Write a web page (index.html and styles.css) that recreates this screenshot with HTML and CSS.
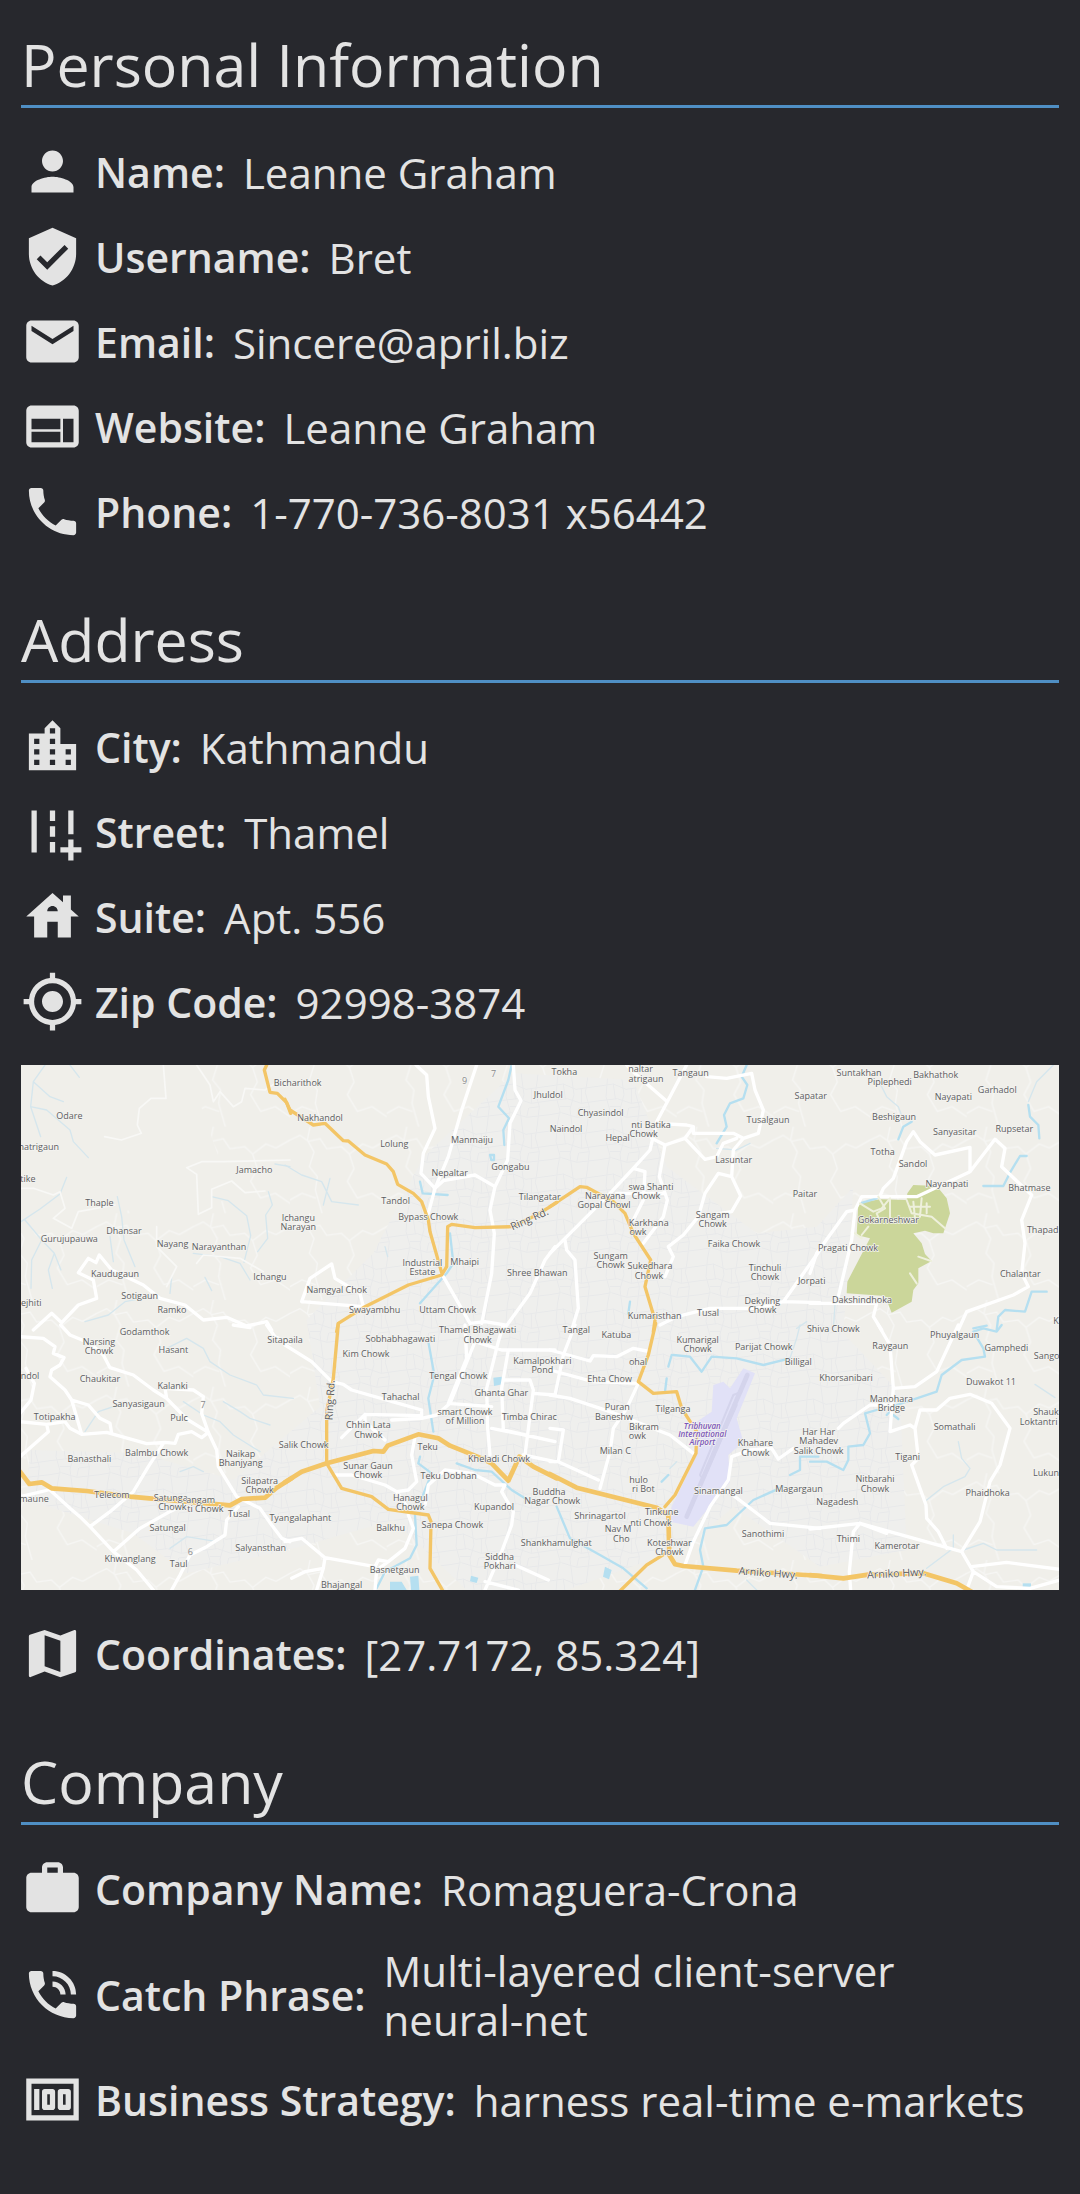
FILE: index.html
```html
<!DOCTYPE html>
<html lang="en">
<head>
<meta charset="utf-8">
<meta name="viewport" content="width=device-width, initial-scale=1">
<title>Leanne Graham</title>
<link rel="stylesheet" href="styles.css">
</head>
<body>
<main class="profile">
  <section class="section">
    <h2 class="section-title">Personal Information</h2>
    <dl class="rows">
      <div class="row">
        <svg class="icon" viewBox="0 0 24 24" aria-hidden="true"><path d="M12 12c2.21 0 4-1.79 4-4s-1.79-4-4-4-4 1.79-4 4 1.79 4 4 4zm0 2c-2.67 0-8 1.34-8 4v2h16v-2c0-2.66-5.33-4-8-4z"/></svg>
        <dt>Name:</dt><dd>Leanne Graham</dd>
      </div>
      <div class="row">
        <svg class="icon" viewBox="0 0 24 24" aria-hidden="true"><path d="M12 1L3 5v6c0 5.55 3.84 10.74 9 12 5.16-1.26 9-6.45 9-12V5l-9-4zm-2 16l-4-4 1.41-1.41L10 14.17l6.59-6.59L18 9l-8 8z"/></svg>
        <dt>Username:</dt><dd>Bret</dd>
      </div>
      <div class="row">
        <svg class="icon" viewBox="0 0 24 24" aria-hidden="true"><path d="M20 4H4c-1.1 0-1.99.9-1.99 2L2 18c0 1.1.9 2 2 2h16c1.1 0 2-.9 2-2V6c0-1.1-.9-2-2-2zm0 4l-8 5-8-5V6l8 5 8-5v2z"/></svg>
        <dt>Email:</dt><dd>Sincere@april.biz</dd>
      </div>
      <div class="row">
        <svg class="icon" viewBox="0 0 24 24" aria-hidden="true"><path d="M20 4H4c-1.1 0-1.99.9-1.99 2L2 18c0 1.1.9 2 2 2h16c1.1 0 2-.9 2-2V6c0-1.1-.9-2-2-2zm-5 14H4v-4h11v4zm0-5H4V9h11v4zm5 5h-4V9h4v9z"/></svg>
        <dt>Website:</dt><dd>Leanne Graham</dd>
      </div>
      <div class="row">
        <svg class="icon" viewBox="0 0 24 24" aria-hidden="true"><path d="M6.62 10.79c1.44 2.83 3.76 5.14 6.59 6.59l2.2-2.2c.27-.27.67-.36 1.02-.24 1.12.37 2.33.57 3.57.57.55 0 1 .45 1 1V20c0 .55-.45 1-1 1-9.39 0-17-7.61-17-17 0-.55.45-1 1-1h3.5c.55 0 1 .45 1 1 0 1.25.2 2.45.57 3.57.11.35.03.74-.25 1.02l-2.2 2.2z"/></svg>
        <dt>Phone:</dt><dd>1-770-736-8031 x56442</dd>
      </div>
    </dl>
  </section>

  <section class="section">
    <h2 class="section-title">Address</h2>
    <dl class="rows">
      <div class="row">
        <svg class="icon" viewBox="0 0 24 24" aria-hidden="true"><path d="M15 11V5l-3-3-3 3v2H3v14h18V11h-6zm-8 8H5v-2h2v2zm0-4H5v-2h2v2zm0-4H5V9h2v2zm6 8h-2v-2h2v2zm0-4h-2v-2h2v2zm0-4h-2V9h2v2zm0-4h-2V5h2v2zm6 12h-2v-2h2v2zm0-4h-2v-2h2v2z"/></svg>
        <dt>City:</dt><dd>Kathmandu</dd>
      </div>
      <div class="row">
        <svg class="icon" viewBox="0 0 24 24" aria-hidden="true"><path d="M20 18v-3h-2v3h-3v2h3v3h2v-3h3v-2zM18 4h2v9h-2zM4 4h2v16H4zM11 4h2v4h-2zM11 10h2v4h-2zM11 16h2v4h-2z"/></svg>
        <dt>Street:</dt><dd>Thamel</dd>
      </div>
      <div class="row">
        <svg class="icon" viewBox="0 0 24 24" aria-hidden="true"><path d="M19 9.3V4h-3v2.6L12 3 2 12h3v8h5v-6h4v6h5v-8h3l-3-2.7zm-9 .7c0-1.1.9-2 2-2s2 .9 2 2h-4z"/></svg>
        <dt>Suite:</dt><dd>Apt. 556</dd>
      </div>
      <div class="row">
        <svg class="icon" viewBox="0 0 24 24" aria-hidden="true"><path d="M12 8c-2.21 0-4 1.79-4 4s1.79 4 4 4 4-1.79 4-4-1.79-4-4-4zm8.94 3c-.46-4.17-3.77-7.48-7.94-7.94V1h-2v2.06C6.83 3.52 3.52 6.83 3.06 11H1v2h2.06c.46 4.17 3.77 7.48 7.94 7.94V23h2v-2.06c4.17-.46 7.48-3.77 7.94-7.94H23v-2h-2.06zM12 19c-3.87 0-7-3.13-7-7s3.13-7 7-7 7 3.13 7 7-3.13 7-7 7z"/></svg>
        <dt>Zip Code:</dt><dd>92998-3874</dd>
      </div>
    </dl>

    <svg class="map" viewBox="63 3195 3114 1575" role="img" aria-label="Map of Kathmandu">
      <defs>
        <pattern id="streets" width="150" height="135" patternUnits="userSpaceOnUse">
          <path class="street" d="M0 18L40 12 78 28 150 18M0 62L52 56 94 70 150 62M0 104L34 98 80 112 150 104M22 0L18 50 30 92 22 135M66 0L72 44 60 88 66 135M112 0L106 38 118 80 112 135M40 12L46 56M94 28L94 70M80 112L86 84 118 80M30 80H62"/>
        </pattern>
        <pattern id="lanes" width="290" height="260" patternUnits="userSpaceOnUse">
          <path class="lane" d="M0 40l30-14 26 18 34-8 20 30 44-6 24 22M60 0l-8 40 20 36-14 44 24 30-6 40 20 70M178 82l40-30 30 12 42-24M178 82l14 44-20 38 30 50 44-14 44 30M0 220l36-20 40 14"/>
        </pattern>
      </defs>
      <path class="land" d="M63 3195H3177V4770H63z"/>
      <path fill="url(#lanes)" d="M560 3195H3177V4770H63V3700L300 3640 700 3600z"/>
      <path class="urban" d="M1270 3470L1540 3220 1900 3240 2000 3500 2270 3700 2450 3680 2560 3560 2530 4000 2700 4180 2720 4650 2460 4700 2200 4520 2060 4640 1700 4770H1400L1180 4560 900 4640 560 4720 400 4600 80 4500 90 4350 420 4360 700 4440 960 4220 920 3960 1120 3760z"/>
      <path fill="url(#streets)" d="M1270 3470L1540 3220 1900 3240 2000 3500 2270 3700 2450 3680 2560 3560 2530 4000 2700 4180 2720 4650 2460 4700 2200 4520 2060 4640 1700 4770H1400L1180 4560 900 4640 560 4720 400 4600 80 4500 90 4350 420 4360 700 4440 960 4220 920 3960 1120 3760z"/>

      <g transform="translate(60 3180)">
        <path class="stream" d="M75 15L40 65 32 140 62 230M40 65L90 110 130 125M32 140L80 150 150 210 160 245 205 293M150 15l28 37M140 352l-20 50-60 45L0 487M292 410L305 470 312 540 345 620M270 530l10 75M15 480l50 60 38 40-18 50 12 55M103 580l20 50M65 540L35 600l-2 85M575 410l50 12 55 45 12 60-20 80M745 395l12 40-20 30 6 70-30 40M520 580l80 10 60 20 30 50M195 785l70-20 50-40 80-15M765 312l45 8M455 650l-5 50M555 652l20 40"/>
        <path class="trail" d="M430 15l8 100-45 0-35 30-6 50 12 25-60 20-50-10M530 15l40 60 10 50 20-30 40 45 25-15 10-40 60 5 30-20M810 300l-200 5-65 0-45 18 30 20 5 120 40-20 0-55 60-25 40 35 60-5M0 385l40 0 60 20 20-10 15 50-35 30 55 30 20-50 110-20M410 500l0 60 60 60-30 60M530 610l20-25 110 10 70 40"/>
        <path class="road" d="M40 810L95 760 125 788 175 735 230 715 220 660 175 638 205 595 228 608 238 585 275 630 370 675 420 715 495 735 550 780 620 772 680 798 740 785 755 810"/>
        <path class="highway" d="M740 15L733 30 750 97 772 100 800 128 812 160"/>
      </g>
      <g transform="translate(60 3975)">
        <path class="stream" d="M440 70l60-30 50 30 20 40 60 40 80 30 20 30 90 10M610 230l50 30 30 20 60 20M490 230l60 40 50 20 40 40 80 50M195 320l40 -60 60-20M480 440l40-15 30 15M450 670l50-35 90 15"/>
        <path class="road" d="M0 35L70 40 105 65 100 85 132 98 120 120 95 135 90 155 135 195 155 225 185 328 260 322 380 356 435 352 465 355 475 328 515 320 545 338 565 322 500 282 440 220 400 195 340 150 270 128 250 90 210 55 150 30 122 0M155 225L205 240 240 280 270 295 275 325M0 290L80 298 135 290 150 310 185 328M80 298L85 320 0 395M18 130l25 45-10 50L0 265M440 220L435 190 520 195 550 215 545 265 565 322 590 375 595 425 650 515 720 550 755 600 785 640 810 650M430 355L385 425 340 500 270 560 210 605 280 680 350 735 400 795M90 495L150 550 185 580 210 605M0 515L85 495M280 680L360 610 440 565 490 540M455 795L480 750 510 690 560 665 615 630 620 585 655 545M740 0l25 35 45 20M640 0l50 8"/>
        <path class="highway heavy" d="M0 440L28 477 65 472 95 490 200 498 330 515 430 524 630 541 665 522 735 518 770 488 815 460"/>
      </g>
      <g transform="translate(855 3180)">
        <path class="river" d="M680 15L670 60 640 140 672 175 655 210 658 255M615 285h12v15h-8zM405 365l8 35 75 5M495 520l10 90-20 30-80 90"/>
        <path class="stream" d="M0 315l50 30 60 20 30 60 80 10M135 355l-20 80M300 560l8 30"/>
        <path class="road" d="M393 15L425 45 430 110 450 205 415 280 408 340 450 385 430 460M575 15L560 60 530 150 490 290 450 385M685 15L690 90 708 122 675 190 668 300 630 380 615 450 628 520 620 640 590 790M450 385L475 362 570 345 630 380M475 650L555 790 600 785 660 795M50 725L75 655 140 612 150 655 225 700 235 740 50 725M810 560L780 600 735 700 655 810"/>
        <path class="highway" d="M0 118L15 150 85 195 120 190 175 242 190 243 240 285 305 312 325 335 338 373 385 400 410 425 430 480 435 515 470 638M155 815L160 790 240 740 370 675 470 645 485 620 488 500 500 493 570 503 680 500 755 465 815 428"/>
      </g>
      <g transform="translate(855 3975)">
        <path class="river" d="M430 50L448 150 430 220 445 320M405 395L400 415 440 445 410 520M515 415L570 435 620 440 680 495 720 520M390 570L395 660 375 700 300 740 275 790"/>
        <path class="water" d="M625 158l25-3 5 22-28 6zM315 770h35l15 25h-50zM375 755l25-3 3 43h-25zM558 752l22 6-5 16-20-5z"/>
        <path class="road" d="M0 60L80 110 140 170 175 178 200 195 330 232 410 255 410 272 240 268 240 290 300 345M320 285L410 280 455 270 495 235 570 50M540 0L545 100 490 235 620 245M655 0L640 50 605 190 608 310 615 390M570 50L650 75 810 75M670 75L650 190 655 315M655 165H735L745 195 720 390M655 315L810 350M745 205L810 210M150 450H200L300 480 335 500 370 495 395 470 380 390 390 335M335 500L370 550M420 540L430 480 480 435 560 445 630 480 660 480 650 500 685 560 680 600 650 680 600 795M370 570L385 610 360 670 310 710 275 735 270 795M310 710L280 705 270 725 120 698 50 640 0 650M120 698L115 730 60 740 20 760M115 730L95 795M690 720L790 765M600 770L700 795M620 310L720 330 810 350M715 390L810 410M240 268l-70 70"/>
        <path class="highway" d="M160 -5L145 160 125 260 125 415 170 490 260 515 310 553 430 570 438 590 435 730 475 800"/>
        <path class="highway heavy" d="M0 472L50 440 125 415 265 378 295 380 308 362 400 328 460 340 495 362 590 400 620 415 670 467 703 395 745 425 815 460"/>
      </g>
      <g transform="translate(1650 3180)">
        <path class="river" d="M590 15L575 50 592 75 580 115 540 130 522 165 530 200 500 250M240 725l-5 35"/>
        <path class="stream" d="M500 265l60 5 40-20M740 805l30-20"/>
        <path class="road" d="M230 15L260 45 352 125 410 15M470 50L530 55 605 40 615 90 640 150 625 220 580 235 550 270 545 350 505 340 465 400 445 470 400 525 355 560 370 590 345 650M352 125L320 185 300 270 250 325 180 400 0 580M320 190L410 195 430 200 405 235 345 255 305 235M430 200L430 220 550 220 580 235M405 235L465 298 500 290 520 250 560 235M345 255L328 350 352 420 340 470 280 550M250 325L285 335 280 420 250 480M200 400H340M545 350L572 408 545 455 445 470M45 540L50 570 75 600 85 745 65 810M330 795L380 770 480 745 620 745 700 725 810 728M700 725L810 570"/>
        <path class="highway" d="M0 440L90 380 110 382 190 425 225 460 250 520 302 600 285 680 315 780 310 815"/>
      </g>
      <g transform="translate(1650 3975)">
        <path class="airport" d="M580 130L615 145 560 280 580 350 535 390 540 470 430 605 360 590 365 545 440 390 440 290 485 260 490 180 520 170 540 190z"/>
        <path class="runway" d="M592 150L410 575"/>
        <path class="taxiway" d="M575 200L550 210 450 450 460 465 560 240"/>
        <path class="river" d="M370 90L420 95 455 140 485 95 560 100 640 120 720 100M365 90l-10 35M345 200l5-40M20 545L60 640 150 690 220 730 290 790M435 795l25-70-10-50 15-65 65-10 80-75 90-40M720 450l30-15 0-40 55 0M355 450l-20 20"/>
        <path class="stream" d="M720 100L740 40 750 0M590 765l30 30M360 430l20-20"/>
        <path class="water" d="M165 725l20 10-8 28-18-8z"/>
        <path class="road" d="M0 75L120 108 130 92 200 95 250 70 290 78M0 135L130 170 265 175 230 250 190 310 180 380 150 490M75 0L40 90 15 210M0 210L60 220 180 260 360 330 430 385M0 310L40 315 25 410 0 410M25 410L145 465M405 720L430 650 480 545 535 465 545 395 600 375 665 370 685 402 730 370M535 500L660 595 810 610"/>
        <path class="highway" d="M317 -5L295 90 265 170 310 205 380 200 395 250 440 320 438 385 375 510 345 545M355 680L290 720 210 798"/>
        <path class="highway heavy" d="M0 447L80 488 320 548 355 570 358 690 375 718 400 723 560 737 815 753"/>
      </g>
      <g transform="translate(2430 3180)">
        <path class="park" d="M292 400L310 375 380 378 410 415 420 460 400 520 370 520 345 512 310 520 335 550 345 582 365 603 325 625V670L310 690 305 725 245 758 225 708 110 700 112 665 180 535 140 525 145 430 210 418 290 420z"/>
        <path class="river" d="M305 185l-25 15-15 38M655 135l5 35 25 25 3 40M650 288h-20l-30 50 -20 40-60 0M560 810l5-40 20-20 60 5 20-60 45 0M490 805l40-8M150 430l50-15"/>
        <path class="stream" d="M205 60l25 50 35 30 15 40M730 15l-50 50-25 60M75 735l-5 70"/>
        <path class="road" d="M0 640L20 580 110 455 135 450 155 410 320 410 480 335 555 238 585 265 575 320 665 405 635 480 645 550 635 640 655 680 610 705 470 755 445 810M210 408L220 385 250 355 290 245 310 215 330 245 375 285 480 262V335M135 450L125 540 85 710M0 730H80L200 730 190 770 215 810"/>
        <path class="park-path" d="M150 430l40 25 25-10 25-30M205 410l20 35-25 15 10 25M290 420l15 40 60 10 40 35M310 425l5 50M335 415l-5 55M350 430v30M300 440h60M240 420v60M135 520l20 15M300 640l20 30M325 590l38 13M155 525l20-25"/>
      </g>
      <g transform="translate(2430 3975)">
        <path class="river" d="M575 0l-15 20-40-10-30 10 30 50 5 25-70 10-60 45-15 50-60 20-60 20-30 30M250 270l15 12M200 255l-35 10 15 60-20 35-45 5 0 40-15 30-50-25-50 0"/>
        <path class="stream" d="M445 350l10 50 25 30-15 25-65 30-50 40M675 178l60 40M460 675l60-20 40 20h120M350 730l80-60v-40"/>
        <path class="water" d="M638 775h25v12h-25z"/>
        <path class="road" d="M205 0L240 60 250 190 240 320 300 300 315 310 330 255 380 255 420 220 480 208 545 235 600 310 570 420 540 470 510 590 455 680 150 595 0 612M250 190L315 185 380 140 445 0M85 310L100 295 180 240 240 240M315 310L325 400 305 420 330 490 348 540 350 580 385 620 410 670M455 680L490 740 470 795M485 725L590 712 750 733M490 740L560 785 660 790 750 765M150 595L130 620 118 740 122 795M150 595L230 625"/>
        <path class="highway heavy" d="M0 750L100 760 180 748 340 745 440 775 485 800"/>
      </g>

      <g class="labels">
        <g transform="translate(60 3180)">
          <text x="148" y="177">Odare</text><text x="56" y="270">natrigaun</text><text x="24" y="366">tike</text><text x="703" y="339">Jamacho</text><text x="238" y="437">Thaple</text><text x="312" y="521">Dhansar</text><text x="148" y="546">Gurujupauwa</text><text x="458" y="561">Nayang</text><text x="597" y="570">Narayanthan</text><text x="285" y="652">Kaudugaun</text><text x="750" y="660">Ichangu</text><text x="359" y="717">Sotigaun</text><text x="34" y="737">ejhiti</text><text x="456" y="758">Ramko</text>
        </g>
        <g transform="translate(60 3975)">
          <text x="374" y="31">Godamthok</text><text x="237" y="60">Narsing</text><text x="237" y="88">Chowk</text><text x="460" y="85">Hasant</text><text x="30" y="163">ndol</text><text x="240" y="171">Chaukitar</text><text x="458" y="191">Kalanki</text><text x="356" y="246">Sanyasigaun</text><text class="ref" x="549" y="248">7</text><text x="104" y="285">Totipakha</text><text x="477" y="289">Pulc</text><text x="410" y="392">Balmbu Chowk</text><text x="208" y="412">Banasthali</text><text x="662" y="395">Naikap</text><text x="662" y="423">Bhanjyang</text><text x="719" y="477">Silapatra</text><text x="719" y="505">Chowk</text><text x="276" y="518">Telecom</text><text x="42" y="530">maune</text><text x="452" y="528">Satunga</text><text x="542" y="534">angam</text><text x="457" y="556">Chowk</text><text x="556" y="562">ti Chowk</text><text x="657" y="576">Tusal</text><text x="443" y="618">Satungal</text><text x="722" y="678">Salyansthan</text><text class="ref" x="511" y="690">6</text><text x="330" y="710">Khwanglang</text><text x="476" y="727">Taul</text><text x="795" y="55">Sitapaila</text>
        </g>
        <g transform="translate(855 3180)">
          <text x="38" y="79">Bicharithok</text><text class="ref" x="539" y="72">9</text><text class="ref" x="626" y="51">7</text><text x="790" y="115">Jhuldol</text><text x="105" y="184">Nakhandol</text><text x="328" y="262">Lolung</text><text x="561" y="249">Manmaiju</text><text x="676" y="330">Gongabu</text><text x="494" y="348">Nepaltar</text><text x="332" y="431">Tandol</text><text x="430" y="480">Bypass Chowk</text><text x="764" y="419">Tilangatar</text><text x="40" y="482">Ichangu</text><text x="40" y="510">Narayan</text><text x="412" y="618">Industrial</text><text x="412" y="646">Estate</text><text x="539" y="615">Mhaipi</text><text x="757" y="649">Shree Bhawan</text><text x="155" y="698">Namgyal Chok</text><text x="269" y="758">Swayambhu</text><text x="488" y="760">Uttam Chowk</text><text class="route" transform="translate(738 487) rotate(-24)">Ring Rd.</text>
        </g>
        <g transform="translate(855 3975)">
          <text x="578" y="25">Thamel Bhagawati</text><text x="578" y="53">Chowk</text><text x="346" y="50">Sobhabhagawati</text><text x="243" y="97">Kim Chowk</text><text x="772" y="117">Kamalpokhari</text><text x="772" y="145">Pond</text><text x="520" y="161">Tengal Chowk</text><text x="347" y="225">Tahachal</text><text x="649" y="214">Ghanta Ghar</text><text x="540" y="269">smart Chowk</text><text x="540" y="297">of Million</text><text x="733" y="285">Timba Chirac</text><text x="250" y="310">Chhin Lata</text><text x="250" y="338">Chwok</text><text x="56" y="368">Salik Chowk</text><text x="428" y="376">Teku</text><text x="642" y="411">Kheladi Chowk</text><text x="249" y="432">Sunar Gaun</text><text x="249" y="460">Chowk</text><text x="491" y="461">Teku Dobhan</text><text x="792" y="509">Buddha</text><text x="802" y="537">Nagar Chowk</text><text x="376" y="528">Hanagul</text><text x="376" y="556">Chowk</text><text x="627" y="556">Kupandol</text><text x="46" y="588">Tyangalaphant</text><text x="317" y="618">Balkhu</text><text x="502" y="609">Sanepa Chowk</text><text x="814" y="662">Shankhamulghat</text><text x="644" y="704">Siddha</text><text x="644" y="732">Pokhari</text><text x="329" y="744">Basnetgaun</text><text x="170" y="789">Bhajangal</text><text class="route" transform="translate(146 226) rotate(-87)">Ring Rd.</text>
        </g>
        <g transform="translate(1650 3180)">
          <text x="43" y="46">Tokha</text><text x="272" y="36">naltar</text><text x="288" y="66">atrigaun</text><text x="422" y="49">Tangaun</text><text x="152" y="167">Chyasindol</text><text x="48" y="217">Naindol</text><text x="303" y="204">nti Batika</text><text x="281" y="232">Chowk</text><text x="203" y="244">Hepal</text><text x="654" y="189">Tusalgaun</text><text x="782" y="118">Sapatar</text><text x="551" y="308">Lasuntar</text><text x="303" y="390">swa Shanti</text><text x="288" y="418">Chowk</text><text x="166" y="416">Narayana</text><text x="162" y="444">Gopal Chowl</text><text x="765" y="411">Paitar</text><text x="296" y="498">Karkhana</text><text x="264" y="525">owk</text><text x="488" y="473">Sangam</text><text x="488" y="501">Chowk</text><text x="552" y="561">Faika Chowk</text><text x="182" y="597">Sungam</text><text x="182" y="625">Chowk</text><text x="300" y="628">Sukedhara</text><text x="297" y="656">Chowk</text><text x="645" y="633">Tinchuli</text><text x="645" y="661">Chowk</text><text x="785" y="671">Jorpati</text><text x="637" y="732">Dekyling</text><text x="637" y="760">Chowk</text><text x="314" y="776">Kumaristhan</text><text x="474" y="767">Tusal</text>
        </g>
        <g transform="translate(1650 3975)">
          <text x="79" y="24">Tangal</text><text x="199" y="39">Katuba</text><text x="443" y="54">Kumarigal</text><text x="443" y="82">Chowk</text><text x="641" y="76">Parijat Chowk</text><text x="264" y="119">ohal</text><text x="745" y="120">Billigal</text><text x="179" y="172">Ehta Chow</text><text x="202" y="256">Puran</text><text x="192" y="284">Baneshw</text><text x="369" y="260">Tilganga</text><text x="282" y="314">Bikram</text><text x="262" y="342">owk</text><text x="196" y="388">Milan C</text><text x="616" y="364">Khahare</text><text x="616" y="392">Chowk</text><text x="806" y="330">Har Har</text><text x="806" y="358">Mahadev</text><text x="806" y="387">Salik Chowk</text><text x="266" y="475">hulo</text><text x="280" y="502">ri Bot</text><text x="505" y="507">Sinamangal</text><text x="747" y="501">Magargaun</text><text x="335" y="571">Tinkune</text><text x="150" y="582">Shrinagartol</text><text x="303" y="602">nti Chowk</text><text x="204" y="622">Nav M</text><text x="214" y="650">Cho</text><text x="639" y="635">Sanothimi</text><text x="358" y="662">Koteshwar</text><text x="358" y="690">Chowk</text><text class="route" transform="translate(654 755) rotate(4)">Arniko Hwy.</text>
          <text class="airport-name" x="457" y="312">Tribhuvan</text><text class="airport-name" x="457" y="335">International</text><text class="airport-name" x="457" y="359">Airport</text>
        </g>
        <g transform="translate(2430 3180)">
          <text x="147" y="48">Suntakhan</text><text x="239" y="76">Piplephedi</text><text x="377" y="55">Bakhathok</text><text x="430" y="120">Nayapati</text><text x="562" y="98">Garhadol</text><text x="252" y="179">Beshigaun</text><text x="434" y="226">Sanyasitar</text><text x="613" y="217">Rupsetar</text><text x="218" y="284">Totha</text><text x="309" y="322">Sandol</text><text x="411" y="380">Nayanpati</text><text x="658" y="393">Bhatmase</text><text x="235" y="489">Gokarneshwar</text><text x="698" y="518">Thapad</text><text x="114" y="574">Pragati Chowk</text><text x="631" y="652">Chalantar</text><text x="156" y="729">Dakshindhoka</text><text x="738" y="793">K</text>
        </g>
        <g transform="translate(2430 3975)">
          <text x="70" y="20">Shiva Chowk</text><text x="241" y="72">Raygaun</text><text x="434" y="40">Phuyalgaun</text><text x="589" y="77">Gamphedi</text><text x="710" y="102">Sango</text><text x="108" y="168">Khorsanibari</text><text x="543" y="181">Duwakot 11</text><text x="244" y="231">Manohara</text><text x="244" y="259">Bridge</text><text x="708" y="271">Shauk</text><text x="686" y="299">Loktantri</text><text x="434" y="315">Somathali</text><text x="293" y="406">Tigani</text><text x="195" y="472">Nitbarahi</text><text x="195" y="500">Chowk</text><text x="708" y="453">Lukun</text><text x="533" y="513">Phaidhoka</text><text x="82" y="540">Nagadesh</text><text x="115" y="651">Thimi</text><text x="261" y="673">Kamerotar</text><text class="route" transform="translate(261 756) rotate(-3)">Arniko Hwy.</text>
        </g>
      </g>
    </svg>

    <dl class="rows">
      <div class="row">
        <svg class="icon" viewBox="0 0 24 24" aria-hidden="true"><path d="M20.5 3l-.16.03L15 5.1 9 3 3.36 4.9c-.21.07-.36.25-.36.48V20.5c0 .28.22.5.5.5l.16-.03L9 18.9l6 2.1 5.64-1.9c.21-.07.36-.25.36-.48V3.5c0-.28-.22-.5-.5-.5zM15 19l-6-2.11V5l6 2.11V19z"/></svg>
        <dt>Coordinates:</dt><dd>[27.7172, 85.324]</dd>
      </div>
    </dl>
  </section>

  <section class="section">
    <h2 class="section-title">Company</h2>
    <dl class="rows">
      <div class="row">
        <svg class="icon" viewBox="0 0 24 24" aria-hidden="true"><path d="M20 6h-4V4c0-1.11-.89-2-2-2h-4c-1.11 0-2 .89-2 2v2H4c-1.11 0-1.99.89-1.99 2L2 19c0 1.11.89 2 2 2h16c1.11 0 2-.89 2-2V8c0-1.11-.89-2-2-2zm-6 0h-4V4h4v2z"/></svg>
        <dt>Company Name:</dt><dd>Romaguera-Crona</dd>
      </div>
      <div class="row">
        <svg class="icon" viewBox="0 0 24 24" aria-hidden="true"><path d="M20 15.5c-1.25 0-2.45-.2-3.57-.57-.35-.11-.74-.03-1.02.24l-2.2 2.2c-2.83-1.44-5.15-3.75-6.59-6.59l2.2-2.21c.28-.26.36-.65.25-1C8.7 6.45 8.5 5.25 8.5 4c0-.55-.45-1-1-1H4c-.55 0-1 .45-1 1 0 9.39 7.61 17 17 17 .55 0 1-.45 1-1v-3.5c0-.55-.45-1-1-1zM19 12h2c0-4.97-4.03-9-9-9v2c3.87 0 7 3.13 7 7zm-4 0h2c0-2.76-2.24-5-5-5v2c1.66 0 3 1.34 3 3z"/></svg>
        <dt>Catch Phrase:</dt><dd>Multi-layered client-server <span class="keep">neural-net</span></dd>
      </div>
      <div class="row">
        <svg class="icon" viewBox="0 0 24 24" aria-hidden="true"><path d="M5 8h2v8H5zm7 0H9c-.55 0-1 .45-1 1v6c0 .55.45 1 1 1h3c.55 0 1-.45 1-1V9c0-.55-.45-1-1-1zm-1 6h-1v-4h1v4zm7-6h-3c-.55 0-1 .45-1 1v6c0 .55.45 1 1 1h3c.55 0 1-.45 1-1V9c0-.55-.45-1-1-1zm-1 6h-1v-4h1v4zM2 4v16h20V4H2zm2 14V6h16v12H4z"/></svg>
        <dt>Business Strategy:</dt><dd>harness real-time e-markets</dd>
      </div>
    </dl>
  </section>
</main>
</body>
</html>
```
FILE: styles.css
```css
* {
  box-sizing: border-box;
}

body {
  margin: 0;
  background: #27282d;
  color: #e3e3e3;
  font-family: "Open Sans", "Noto Sans", sans-serif;
}

.profile {
  display: flex;
  flex-direction: column;
  gap: 55px;
  padding: 23px 21px 62px;
}

.section {
  display: flex;
  flex-direction: column;
  gap: 32px;
}

.section-title {
  margin: 0;
  border-bottom: 3px solid #4f8fc4;
  font-size: 59px;
  font-weight: 400;
  line-height: 82px;
}

.rows {
  display: flex;
  flex-direction: column;
  gap: 22px;
  margin: 0;
}

.row {
  display: flex;
  align-items: center;
  line-height: 49px;
}

.icon {
  flex: none;
  width: 63px;
  height: 63px;
  margin-right: 11px;
  fill: currentColor;
}

.row dt {
  flex: none;
  margin-right: 18px;
  padding-top: 2px;
  font-size: 41px;
  font-weight: 600;
}

.row dd {
  margin: 0;
  padding: 4px 0 2px;
  font-size: 42px;
}

.keep {
  white-space: nowrap;
}

.map {
  display: block;
  width: 100%;
  height: auto;
  overflow: hidden;
}

.map path {
  stroke-linecap: round;
  stroke-linejoin: round;
}

.land {
  fill: #f0efea;
}

.urban {
  fill: #efefed;
}

.street,
.lane,
.trail,
.stream,
.river,
.road,
.highway,
.runway,
.taxiway,
.park-path {
  fill: none;
}

.street {
  stroke: #e8e9ea;
  stroke-width: 3;
}

.lane {
  stroke: #f6f6f4;
  stroke-width: 4;
}

.trail {
  stroke: #f8f8f6;
  stroke-width: 5;
}

.stream {
  stroke: #d5e6ed;
  stroke-width: 4;
}

.river {
  stroke: #b5dff0;
  stroke-width: 7;
}

.water {
  fill: #b5dff0;
}

.road {
  stroke: #ffffff;
  stroke-width: 10;
}

.highway {
  stroke: #f3c566;
  stroke-width: 10;
}

.heavy {
  stroke-width: 14;
}

.airport {
  fill: #e1e1f7;
}

.runway {
  stroke: #d4d4ec;
  stroke-width: 14;
}

.taxiway {
  stroke: #d4d4ec;
  stroke-width: 6;
}

.park {
  fill: #cbd69a;
}

.park-path {
  stroke: #eef0dc;
  stroke-width: 6;
}

.labels text {
  fill: #5c5c60;
  stroke: #f4f4f1;
  stroke-width: 4;
  paint-order: stroke;
  font-size: 27px;
  text-anchor: middle;
}

.labels .ref {
  fill: #8a8a8c;
}

.labels .route {
  font-size: 32px;
}

.labels .airport-name {
  fill: #7a55b8;
  font-size: 24px;
  font-style: italic;
  font-weight: 600;
}
```
